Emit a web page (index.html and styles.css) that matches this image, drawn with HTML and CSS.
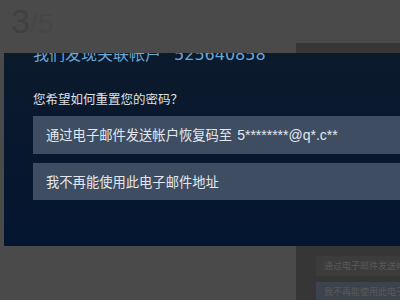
FILE: index.html
```
<html>
	<head>
        <meta http-equiv="Content-Type" content="text/html; charset=utf-8">
        <meta name="viewport" content="width=device-width, initial-scale=1.0">
        <title>帐户找回</title>
        <link rel="stylesheet" href="styles.css">
    </head>
    <body>
        <div class="page">
            <div class="counter"><span class="current">3</span><span class="total">/5</span></div>
            <div class="under">
                <div class="underLeft"></div>
                <div class="underRight">
                    <div class="sideItems">
                        <div class="sideItem">通过电子邮件发送帐户恢复</div>
                        <div class="sideItem blue">我不再能使用此电子邮件</div>
                    </div>
                </div>
            </div>
        </div>
        <div class="modal">
            <h2 class="found">我们发现关联帐户<span class="accountId">525640858</span></h2>
            <p class="question">您希望如何重置您的密码？</p>
            <div class="option">通过电子邮件发送帐户恢复码至 <span class="latin">5********@q*.c**</span></div>
            <div class="option">我不再能使用此电子邮件地址</div>
        </div>
    </body>
</html>
```
FILE: styles.css
```
body{
    margin: 0;
    background: #4a4a4a;
    font-family: "Noto Sans CJK SC", "Liberation Sans", sans-serif;
    width: 400px;
    height: 300px;
    overflow: hidden;
    position: relative;
}
.page{
    display: flex;
    flex-direction: column;
    height: 300px;
}
.counter{
    height: 43px;
    padding-left: 11px;
    font-family: "Liberation Sans", sans-serif;
    color: #404040;
    line-height: 43px;
}
.current{
    font-size: 34px;
}
.total{
    font-size: 28px;
    color: #464646;
}
.under{
    flex: 1;
    display: flex;
}
.underLeft{
    width: 296px;
    flex-shrink: 0;
}
.underRight{
    flex: 1;
    min-width: 0;
    background: #363636;
    padding-left: 20px;
    padding-top: 213px;
}
.sideItems{
    display: flex;
    flex-direction: column;
    gap: 6px;
}
.sideItem{
    height: 20px;
    line-height: 20px;
    padding-left: 8px;
    font-size: 9px;
    color: #595959;
    background: #3c3c3c;
    white-space: nowrap;
    overflow: hidden;
}
.sideItem.blue{
    background: #3d434c;
}
.modal{
    position: absolute;
    left: 4px;
    top: 53px;
    width: 460px;
    height: 193px;
    overflow: hidden;
    background: linear-gradient(180deg, #0c1a2c 0%, #07172e 60%, #041530 100%);
    padding-left: 29px;
    box-sizing: border-box;
}
.found{
    margin: -8px 0 0 0;
    font-size: 16px;
    line-height: 16px;
    font-weight: normal;
    color: #67a7d6;
    white-space: nowrap;
}
.accountId{
    font-family: "DejaVu Sans", sans-serif;
    margin-left: 13px;
}
.question{
    margin: 29px 0 0 0;
    font-size: 12.5px;
    line-height: 13px;
    color: #dde2e8;
}
.option{
    margin-top: 11px;
    height: 38px;
    line-height: 38px;
    padding-left: 13px;
    background: #3e4d61;
    color: #e3e8ee;
    font-size: 13.3px;
    white-space: nowrap;
}
.option + .option{
    margin-top: 9px;
    height: 37px;
    line-height: 37px;
}
.latin{
    font-family: "Liberation Sans", sans-serif;
    font-size: 14px;
    margin-left: 2px;
}
```
